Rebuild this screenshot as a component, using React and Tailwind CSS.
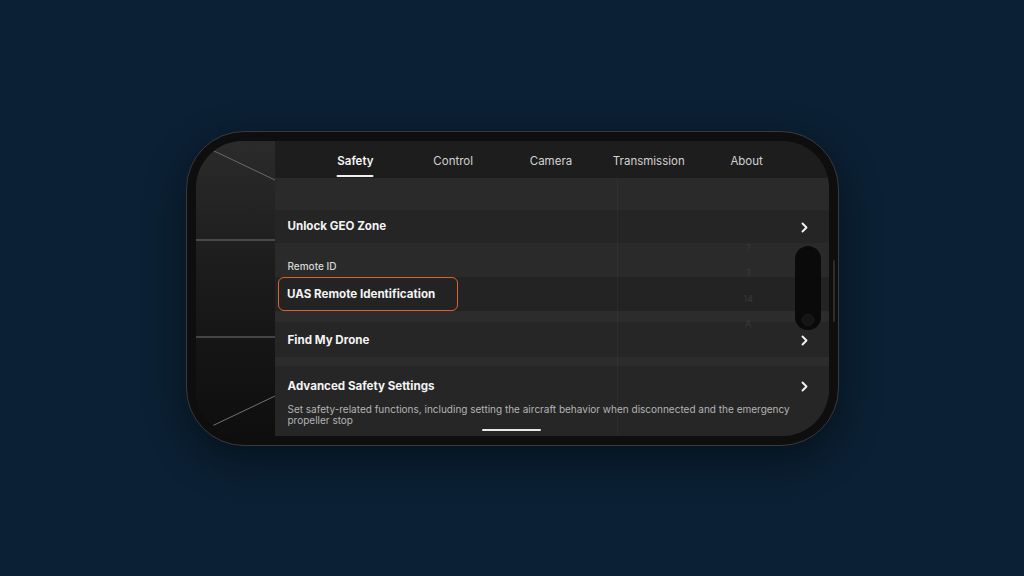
import React from "react";

const Chevron = () => (
  <svg width="9" height="11" viewBox="0 0 9 11" fill="none" className="shrink-0">
    <path d="M2.5 1.5 L6.5 5.5 L2.5 9.5" stroke="#f2f2f2" strokeWidth="1.9" strokeLinecap="round" strokeLinejoin="round" />
  </svg>
);

const tabs = ["Safety", "Control", "Camera", "Transmission", "About"];

export default function App() {
  return (
    <div
      className="w-[1024px] h-[576px] bg-[#0b2034] flex items-center justify-center overflow-hidden"
      style={{ fontFamily: "Inter, 'Open Sans', sans-serif" }}
    >
      <div className="relative w-[653px] h-[315px] rounded-[58px] bg-[#0e0e0f] border-[1.5px] border-[#3a3a3c] p-[9px] shadow-[0_14px_40px_rgba(0,0,0,0.45)]">
        {/* side button */}
        <div className="absolute right-[3px] top-[128px] w-[2px] h-[62px] rounded-full bg-[#2c2c2e]" />
        <div className="relative w-full h-full rounded-[47px] overflow-hidden flex bg-[#1d1d1e]">
          {/* left camera panel */}
          <div className="relative w-[79px] h-full bg-gradient-to-b from-[#2b2b2c] via-[#1a1a1b] to-[#0e0e0f]">
            <svg className="absolute inset-0" width="79" height="294" viewBox="0 0 79 294">
              <line x1="16" y1="9" x2="79" y2="39" stroke="#7a7a7a" strokeWidth="0.8" />
              <line x1="0" y1="99" x2="79" y2="99" stroke="#8a8a8a" strokeWidth="0.8" />
              <line x1="0" y1="196" x2="79" y2="196" stroke="#8a8a8a" strokeWidth="0.8" />
              <line x1="16" y1="285" x2="79" y2="255" stroke="#8a8a8a" strokeWidth="0.8" />
            </svg>
          </div>

          {/* settings panel */}
          <div className="relative flex-1 flex flex-col">
            {/* tab bar */}
            <div className="h-[37px] shrink-0 bg-[#1d1d1e] grid grid-cols-5 pl-[32px] pr-[33px]">
              {tabs.map((t, i) => (
                <div key={t} className="relative flex items-center justify-center pt-[5px]">
                  <span
                    className={
                      i === 0
                        ? "text-[11.5px] font-semibold text-[#f5f5f5]"
                        : "text-[11.5px] font-normal text-[#d2d2d2]"
                    }
                  >
                    {t}
                  </span>
                  {i === 0 && (
                    <div className="absolute bottom-[1px] left-1/2 -translate-x-1/2 w-[37px] h-[2px] rounded-full bg-[#f0f0f0]" />
                  )}
                </div>
              ))}
            </div>

            <div className="h-[32px] shrink-0 bg-[#2a2a2b]" />

            <div className="h-[33px] shrink-0 bg-[#252526] flex items-center justify-between pl-[13px] pr-[20px] pt-[2px]">
              <span className="text-[11.6px] font-bold text-[#f4f4f4]">Unlock GEO Zone</span>
              <Chevron />
            </div>

            <div className="h-[34px] shrink-0 bg-[#2a2a2b] flex items-end pl-[13px] pb-[3px]">
              <span className="text-[10px] font-medium text-[#d8d8d8]">Remote ID</span>
            </div>

            <div className="h-[34px] shrink-0 bg-[#232324] flex items-stretch pl-[3px]">
              <div className="w-[180px] rounded-[6px] border-[1.5px] border-[#e0622c] flex items-center pl-[8.5px] pt-[2px]">
                <span className="text-[11.6px] font-bold text-[#f4f4f4]">UAS Remote Identification</span>
              </div>
            </div>

            <div className="h-[11px] shrink-0 bg-[#2c2c2d]" />

            <div className="h-[35px] shrink-0 bg-[#262627] flex items-center justify-between pl-[13px] pr-[20px] pt-[3px]">
              <span className="text-[11.6px] font-bold text-[#f4f4f4]">Find My Drone</span>
              <Chevron />
            </div>

            <div className="h-[9px] shrink-0 bg-[#2c2c2d]" />

            <div className="flex-1 bg-[#262627] pl-[13px] pr-[20px] pt-[12px]">
              <div className="flex items-center justify-between">
                <span className="text-[11.6px] font-bold text-[#f4f4f4]">Advanced Safety Settings</span>
                <Chevron />
              </div>
              <p className="mt-[9px] w-[515px] text-[10px] leading-[11px] text-[#b4b4b4]">
                Set safety-related functions, including setting the aircraft behavior when disconnected and the emergency propeller stop
              </p>
            </div>

            {/* faint vertical line */}
            <div className="absolute left-[342px] top-[37px] bottom-0 w-px bg-[#ffffff08]" />

            {/* faint overlay glyphs */}
            <div className="absolute left-[469px] top-[100px] flex flex-col items-center gap-[12px] text-[9px] text-[#38383a]">
              <span>7</span>
              <span>3</span>
              <span>14</span>
              <span>A</span>
            </div>

            {/* home indicator */}
            <div className="absolute left-[207px] bottom-[5px] w-[59px] h-[2px] rounded-full bg-[#e8e8e8]" />

            {/* dynamic island */}
            <div className="absolute right-[8px] top-[105px] w-[26px] h-[84px] rounded-full bg-[#0a0a0a] flex items-end justify-center pb-[4px]">
              <div className="w-[12px] h-[12px] rounded-full bg-[#141414] border border-[#1e1e1e]" />
            </div>
          </div>
        </div>
      </div>
    </div>
  );
}
